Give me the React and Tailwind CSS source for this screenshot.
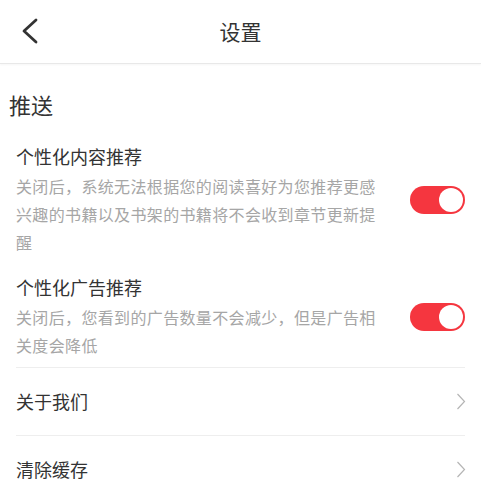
const font = { fontFamily: '"Noto Sans CJK SC", "Noto Sans", sans-serif' };

function Toggle() {
  return (
    <div className="flex h-[28px] w-[55px] shrink-0 items-center justify-end rounded-full bg-[#f5363f] pr-[2px]">
      <div className="h-[24px] w-[24px] rounded-full bg-white" />
    </div>
  );
}

function SwitchItem({ title, desc, className }) {
  return (
    <div className={"flex items-center justify-between " + className}>
      <div className="w-[368px]">
        <div className="text-[18px] leading-[26px] text-[#333]">{title}</div>
        <div className="mt-[3px] text-[16px] leading-[28px] tracking-[0.35px] text-[#a6a6a6]">{desc}</div>
      </div>
      <Toggle />
    </div>
  );
}

function LinkRow({ label }) {
  return (
    <div className="flex h-[68px] items-center justify-between border-t border-[#eeeeee]">
      <span className="text-[18px] text-[#333]">{label}</span>
      <svg width="10" height="17" viewBox="0 0 10 17" fill="none" className="mr-[-1px]">
        <polyline points="1.5,1 8.5,8.5 1.5,16" stroke="#b5b5b5" strokeWidth="1.2" />
      </svg>
    </div>
  );
}

export default function App() {
  return (
    <div className="min-h-[498px] w-full overflow-hidden bg-white" style={font}>
      <header className="relative flex h-[64px] items-center justify-center border-b border-[#e8e8e8] shadow-[0_1px_2px_rgba(0,0,0,0.04)]">
        <svg className="absolute left-[20px] top-[17px]" width="20" height="28" viewBox="0 0 20 28" fill="none">
          <polyline points="16,3 4,14 16,25" stroke="#333" strokeWidth="2.8" strokeLinecap="round" strokeLinejoin="round" />
        </svg>
        <h1 className="text-[21px] text-[#333]">设置</h1>
      </header>

      <div className="pl-[9px] pt-[25px] text-[22px] leading-[30px] text-[#333]">推送</div>

      <div className="px-4">
        <SwitchItem
          className="mt-[24px]"
          title="个性化内容推荐"
          desc="关闭后，系统无法根据您的阅读喜好为您推荐更感兴趣的书籍以及书架的书籍将不会收到章节更新提醒"
        />
        <SwitchItem
          className="mt-[18px]"
          title="个性化广告推荐"
          desc="关闭后，您看到的广告数量不会减少，但是广告相关度会降低"
        />
        <div className="mt-[8px]">
          <LinkRow label="关于我们" />
          <LinkRow label="清除缓存" />
        </div>
      </div>
    </div>
  );
}
